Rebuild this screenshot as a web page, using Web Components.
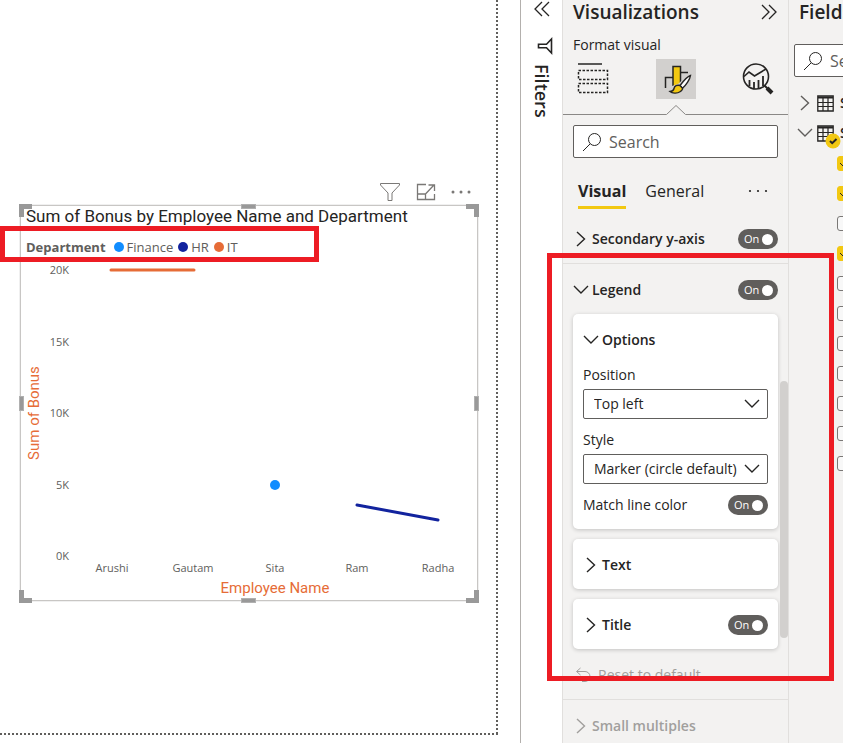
<!DOCTYPE html>
<html lang="en">
<head>
<meta charset="utf-8">
<title>Report editor</title>
<style>
  html, body { margin: 0; height: 100%; }
  body {
    position: relative;
    display: grid;
    grid-template-columns: minmax(0, 1fr) 41px 227px 54px;
    height: 100vh;
    overflow: hidden;
    background: #fff;
    color: #252423;
    font-family: "Open Sans", "Noto Sans", sans-serif;
    font-size: 14px;
    line-height: 20px;
  }
  .around-legend { left: 0; top: 226px; width: 319px; height: 36px; }
  .around-options { right: 9px; top: 253px; width: 287px; height: 428px; }
</style>
</head>
<body>
<report-canvas>
  <chart-visual heading="Sum of Bonus by Employee Name and Department">
    <legend-item slot="legend" style="--dot:#118dff">Finance</legend-item>
    <legend-item slot="legend" style="--dot:#12239e">HR</legend-item>
    <legend-item slot="legend" style="--dot:#e66c37">IT</legend-item>
  </chart-visual>
</report-canvas>
<filters-pane></filters-pane>
<viz-pane></viz-pane>
<fields-pane></fields-pane>
<callout-frame class="around-legend"></callout-frame>
<callout-frame class="around-options"></callout-frame>

<script>
const ICONS = {
  'right': [10, 18, '<path d="M1 2l7.500 7L1 16" stroke-width="1.400"/>'],
  'down': [16, 10, '<path d="M1 1l7 7 7-7" stroke-width="1.400"/>'],
  'collapse-left': [18, 16, '<path d="M9 1L2 8l7 7M16 1L9 8l7 7" stroke-width="1.300"/>'],
  'collapse-right': [18, 16, '<path d="M2 1l7 7-7 7M9 1l7 7-7 7" stroke-width="1.300"/>'],
  'search': [20, 20, '<circle cx="12.500" cy="7.500" r="6"/><path d="M8.200 11.800L1 19"/>'],
  'funnel': [22, 20, '<path d="M1.500 1.500h19v1.500L13 11v7.500H9V11L1.500 3z"/>'],
  'funnel-side': [16, 18, '<path d="M14.500 2v14l-5-5.200H1.500V7.200h8z" stroke-width="1.600"/>'],
  'focus': [20, 18, '<path d="M10 1.500H1.500v15h17V11M1.500 11h8v5.500M9.500 11L17.500 2.500M12.500 2h6v6" stroke-width="1.300"/>'],
  'more': [20, 6, '<g fill="currentColor" stroke="none"><circle cx="2" cy="3" r="1.500"/><circle cx="10" cy="3" r="1.500"/><circle cx="18" cy="3" r="1.500"/></g>'],
  'dots': [20, 6, '<g fill="currentColor" stroke="none"><circle cx="2" cy="3" r="1.100"/><circle cx="10" cy="3" r="1.100"/><circle cx="18" cy="3" r="1.100"/></g>'],
  'undo': [16, 16, '<path d="M5.500 1L1.500 4.500 5.500 8M2 4.500h8a4.500 4.500 0 0 1 0 10H7"/>'],
  'table': [17, 17, '<path d="M.8 1h15.400v15H.8z" stroke-width="1.300"/><path d="M1 2.500h15" stroke-width="2"/><path d="M1 7.500h15M1 11.500h15M6 3v13M11 3v13" stroke-width="1.200"/>'],
  'build': [32, 34, '<path d="M1 2h24" stroke-width="1.500"/><path d="M1.500 8.500h29v9h-29zM1.500 21.500h29v9h-29z" stroke-width="1.500" stroke-dasharray="2.500 1.500"/>'],
  'format': [40, 40, '<path d="M9.500 29V18.500H17M24.500 13.500H32" stroke-width="1.500"/><path d="M17 7.500h7.500V29H17z" fill="#f2c811" stroke-width="1.500"/><path d="M33 15L22 25l-6 2-5 7 10 3 8-6 8-13z" fill="#d2d0ce" stroke="none"/><path d="M34.500 16.500c-3 1-7.500 6-10.500 10l2.500 2.800c3.500-3 7.500-9 8-12.800z" fill="#fff" stroke-width="1.400"/><path d="M24 26.500c-3-1-5.500.5-6 3-.4 2-1.700 2.800-4 3 2 1.800 7 2.400 10 .3 2.200-1.500 2.800-2.500 2.500-3.500z" fill="#f2c811" stroke-width="1.400"/>'],
  'analyze': [32, 32, '<circle cx="14" cy="13.500" r="12.500" stroke-width="1.600"/><path d="M2 13.500l5-4.500 5.500 4L24 6" stroke-width="1.600"/><path d="M7.500 17v6M12 19v6.500M16.500 17v8.500M21 13v10" stroke-width="1.800"/><path d="M22.500 22.500L26 26" stroke-width="2"/><path d="M25 25l5 5" stroke-width="4"/>'],
  'badge': [16, 16, '<circle cx="8" cy="8" r="7.500" fill="#f2c811" stroke="none"/><path d="M5 8l2.200 2.200L11.500 6" stroke-width="2"/>']
};

class Base extends HTMLElement {
  connectedCallback() {
    if (this.shadowRoot) return;
    this.attachShadow({ mode: 'open' }).innerHTML =
      '<style>*{box-sizing:border-box}button{font:inherit;color:inherit;background:none;border:0;padding:0;text-align:left}' +
      this.css() + '</style>' + this.html();
  }
  css() { return ''; }
  html() { return '<slot></slot>'; }
}

customElements.define('ui-icon', class extends Base {
  css() { return ':host{display:inline-flex;flex:none}svg{display:block}'; }
  html() {
    const [w, h, body] = ICONS[this.getAttribute('name')];
    return `<svg width="${w}" height="${h}" viewBox="0 0 ${w} ${h}" fill="none" stroke="currentColor" aria-hidden="true">${body}</svg>`;
  }
});

customElements.define('callout-frame', class extends Base {
  css() { return ':host{position:absolute;box-sizing:border-box;border:5px solid #ed1c24;pointer-events:none;z-index:5}'; }
  html() { return ''; }
});

customElements.define('report-canvas', class extends Base {
  css() {
    return `:host{display:flex;border-right:1px solid #b3b0ad;padding:0 22px 8px 0;min-width:0;box-sizing:border-box}
    .page{flex:1;min-width:0;padding:182px 20px 0 20px;
      background:repeating-linear-gradient(180deg,#605e5c 0 2px,transparent 2px 4px) right/2px 100% no-repeat,
      repeating-linear-gradient(90deg,#605e5c 0 2px,transparent 2px 4px) bottom/100% 2px no-repeat}`;
  }
  html() { return '<main class="page"><slot></slot></main>'; }
});

customElements.define('legend-item', class extends Base {
  css() {
    return ':host{display:inline-flex;align-items:center;gap:3px}i{width:10px;height:10px;border-radius:50%;background:var(--dot)}';
  }
  html() { return '<i></i><span><slot></slot></span>'; }
});

customElements.define('chart-visual', class extends Base {
  css() {
    return `:host{display:block}
    .tools{display:flex;justify-content:flex-end;align-items:center;gap:15px;height:20px;margin:0 7px 3px 0;color:#7a7876}
    .tools button{display:flex}
    .frame{position:relative;border:1px solid #c8c6c4;box-shadow:0 0 0 1px #f0f0f0}
    h2{margin:0;padding-left:5px;font:400 17px/20px Roboto,sans-serif;color:#252423;white-space:nowrap}
    .legend{display:flex;align-items:center;gap:5px;margin-top:11px;padding-left:5px;font-size:13px;line-height:20px;color:#605e5c}
    .legend b{margin-right:3px}
    .plot{display:block;width:100%;height:auto;margin-top:5px;font-size:11px;fill:#605e5c;overflow:visible}
    .axis{font:400 15px Roboto,sans-serif;fill:#e66c37}
    .h{position:absolute;background:#999;box-shadow:inset 0 0 0 1px #b0b0b0}
    .t,.b{left:50%;width:15px;height:5px;margin-left:-8px}
    .t{top:-2px}.b{bottom:-3px}
    .l,.r{top:50%;width:5px;height:15px;margin-top:-7px}
    .l{left:-2px}.r{right:-2px}
    .c{position:absolute;width:13px;height:13px;border:0 solid #999}
    .tl{left:-2px;top:-2px;border-width:5px 0 0 5px}
    .tr{right:-2px;top:-2px;border-width:5px 5px 0 0}
    .bl{left:-2px;bottom:-3px;border-width:0 0 5px 5px}
    .br{right:-2px;bottom:-3px;border-width:0 5px 5px 0}`;
  }
  html() {
    const ys = [['20K', 12], ['15K', 84], ['10K', 155], ['5K', 227], ['0K', 298]];
    const xs = [['Arushi', 91], ['Gautam', 172], ['Sita', 254], ['Ram', 336], ['Radha', 417]];
    return `<div class="tools"><button aria-label="Filters"><ui-icon name="funnel"></ui-icon></button>
      <button aria-label="Focus mode"><ui-icon name="focus"></ui-icon></button>
      <button aria-label="More options"><ui-icon name="more"></ui-icon></button></div>
    <section class="frame">
      <i class="c tl"></i><i class="c tr"></i><i class="c bl"></i><i class="c br"></i>
      <i class="h t"></i><i class="h b"></i><i class="h l"></i><i class="h r"></i>
      <h2>${this.getAttribute('heading')}</h2>
      <div class="legend"><b>Department</b><slot name="legend"></slot></div>
      <svg class="plot" viewBox="0 0 456 338">
        ${ys.map(([t, y]) => `<text x="48" y="${y}" text-anchor="end">${t}</text>`).join('')}
        ${xs.map(([t, x]) => `<text x="${x}" y="310" text-anchor="middle">${t}</text>`).join('')}
        <text class="axis" x="254" y="331" text-anchor="middle">Employee Name</text>
        <text class="axis" transform="translate(18 151) rotate(-90)" text-anchor="middle">Sum of Bonus</text>
        <g fill="none" stroke-width="3" stroke-linecap="round">
          <path d="M90 8H173" stroke="#e66c37"/><path d="M336 243L417 258" stroke="#12239e"/>
        </g>
        <circle cx="254" cy="223" r="5" fill="#118dff"/>
      </svg>
    </section>`;
  }
});

customElements.define('filters-pane', class extends Base {
  css() {
    return `:host{display:flex;flex-direction:column;align-items:center;background:#fff}
    button{display:flex;margin-top:1px}.f{margin-top:20px;margin-left:7px}
    h2{margin:9px 0 0;font-size:18px;line-height:24px;font-weight:600;writing-mode:vertical-rl}`;
  }
  html() {
    return `<button aria-label="Expand filters"><ui-icon name="collapse-left"></ui-icon></button>
    <ui-icon class="f" name="funnel-side"></ui-icon><h2>Filters</h2>`;
  }
});

customElements.define('search-box', class extends Base {
  css() {
    return `:host{display:block}
    label{display:flex;align-items:center;gap:7px;height:33px;padding-left:8px;background:#fff;border:1px solid #605e5c;border-radius:2px}
    input{flex:1;min-width:0;width:0;border:0;padding:0;outline:0;background:none;font:inherit;font-size:16px;color:inherit}
    input::placeholder{color:#605e5c;opacity:1}`;
  }
  html() { return '<label><ui-icon name="search"></ui-icon><input type="search" placeholder="Search" aria-label="Search"></label>'; }
});

customElements.define('toggle-switch', class extends Base {
  css() {
    return `:host{display:block;flex:none}
    label{display:grid;align-items:center;width:40px;height:20px}
    input,span,i{grid-area:1/1}
    input{appearance:none;margin:0;width:40px;height:20px;border-radius:10px;background:#605e5c}
    span{padding-left:6px;color:#fff;font-size:11px;line-height:20px;pointer-events:none}
    i{justify-self:end;margin-right:5px;width:11px;height:11px;border-radius:50%;background:#fff;pointer-events:none}`;
  }
  html() {
    return `<label><input type="checkbox" role="switch" checked aria-label="${this.getAttribute('label')}"><span>On</span><i></i></label>`;
  }
});

customElements.define('group-header', class extends Base {
  css() {
    return `:host{display:flex;align-items:center;height:50px;padding-top:2px;box-sizing:border-box}
    button{flex:1;display:flex;align-items:center;gap:4px;font-weight:600}
    .i{display:flex;justify-content:center;width:15px}`;
  }
  html() {
    const open = this.hasAttribute('open'), name = this.getAttribute('label');
    return `<button aria-expanded="${open}"><span class="i"><ui-icon name="${open ? 'down' : 'right'}"></ui-icon></span>${name}</button>` +
      (this.hasAttribute('toggle') ? `<toggle-switch label="${name}"></toggle-switch>` : '');
  }
});

customElements.define('option-card', class extends Base {
  css() {
    return ':host{display:block;padding:0 10px;background:#fff;border-radius:5px;box-shadow:0 1px 4px rgba(0,0,0,.2)}';
  }
});

customElements.define('pick-list', class extends Base {
  css() {
    return `:host{display:block;margin-bottom:11px}
    label{display:grid;grid-template-rows:20px 30px;row-gap:4px;align-items:center}
    select,ui-icon{grid-area:2/1}
    select{appearance:none;width:100%;height:30px;padding:0 28px 0 10px;border:1px solid #605e5c;border-radius:2px;background:#fff;font:inherit;color:inherit}
    ui-icon{justify-self:end;margin-right:8px;pointer-events:none}`;
  }
  html() {
    return `<label>${this.getAttribute('label')}<select><option>${this.getAttribute('value')}</option></select><ui-icon name="down"></ui-icon></label>`;
  }
});

customElements.define('viz-pane', class extends Base {
  css() {
    return `:host{position:relative;display:block;min-width:0;background:#f3f2f1;border:solid #e1dfdd;border-width:0 1px;box-sizing:border-box;overflow:hidden}
    .pad{padding:0 10px}
    header{display:flex;align-items:center;justify-content:space-between;height:24px}
    header button{display:flex}
    h2{margin:0;font-size:19px;line-height:24px;font-weight:600}
    p{margin:9px 0 2px;line-height:24px}
    .modes{display:flex;justify-content:space-between;padding:0 4px}
    .modes button{display:grid;place-items:center;height:40px;min-width:32px}
    .modes .on{width:40px;background:#d2d0ce}
    .notch{display:flex;align-items:flex-end;height:16px;margin-bottom:10px}
    .notch::before,.notch::after{content:"";flex:1;border-bottom:1px solid #8a8886}
    .notch svg{display:block;flex:none}
    .tabs{display:flex;align-items:flex-start;margin:21px 0 4px;padding:0 5px;font-size:16px;line-height:24px}
    .tabs button{height:30px;margin-right:19px;padding-bottom:3px;border-bottom:3px solid transparent}
    .tabs .on{font-weight:700;border-color:#f2c811}
    .tabs .more{display:flex;margin:0 5px 0 auto;height:24px;border:0;padding:0;align-items:center}
    .sec{padding:0 10px;border-bottom:1px solid #e1dfdd}
    .cards{display:grid;gap:10px}
    .options{margin-bottom:1px}
    .row{display:flex;align-items:center;justify-content:space-between;padding-bottom:14px}
    .reset{display:flex;align-items:center;gap:7px;height:50px;padding:2px 0 0 2px}
    .off{color:#a19f9d}
    .thumb{position:absolute;right:0;top:381px;width:8px;height:257px;border-radius:4px;background:#d2d0ce}`;
  }
  html() {
    return `<div class="pad">
      <header><h2>Visualizations</h2><button aria-label="Collapse"><ui-icon name="collapse-right"></ui-icon></button></header>
      <p>Format visual</p>
      <div class="modes"><button aria-label="Build visual"><ui-icon name="build"></ui-icon></button>
        <button class="on" aria-label="Format visual"><ui-icon name="format"></ui-icon></button>
        <button aria-label="Analytics"><ui-icon name="analyze"></ui-icon></button></div>
    </div>
    <div class="notch"><svg width="22" height="10" viewBox="0 0 22 10" fill="none" stroke="#8a8886"><path d="M0 9.500H1.500L11 .5l9.500 9H22"/></svg></div>
    <div class="pad"><search-box></search-box>
      <nav class="tabs"><button class="on">Visual</button><button>General</button><button class="more" aria-label="More options"><ui-icon name="dots"></ui-icon></button></nav>
    </div>
    <div class="sec"><group-header label="Secondary y-axis" toggle></group-header></div>
    <div class="sec">
      <group-header label="Legend" open toggle></group-header>
      <div class="cards">
        <option-card>
          <group-header class="options" label="Options" open></group-header>
          <pick-list label="Position" value="Top left"></pick-list>
          <pick-list label="Style" value="Marker (circle default)"></pick-list>
          <div class="row"><span>Match line color</span><toggle-switch label="Match line color"></toggle-switch></div>
        </option-card>
        <option-card><group-header label="Text"></group-header></option-card>
        <option-card><group-header label="Title" toggle></group-header></option-card>
      </div>
      <button class="reset off"><ui-icon name="undo"></ui-icon>Reset to default</button>
    </div>
    <div class="sec off"><group-header label="Small multiples"></group-header></div>
    <div class="thumb"></div>`;
  }
});

customElements.define('field-check', class extends Base {
  css() {
    return `:host{display:flex;align-items:center;height:30px;padding-left:48px;box-sizing:border-box}
    label{display:grid;place-items:center}
    input,svg{grid-area:1/1}
    input{appearance:none;margin:0;width:15px;height:15px;border:1px solid #7a7876;border-radius:3px;background:#f8f8f8}
    input:checked{background:#f2c811;border-color:#f2c811}
    svg{pointer-events:none;visibility:hidden}input:checked+svg{visibility:visible}`;
  }
  html() {
    return `<label><input type="checkbox" aria-label="Field" ${this.hasAttribute('checked') ? 'checked' : ''}><svg width="11" height="9" viewBox="0 0 11 9" fill="none" stroke="#252423"><path d="M1 4l3 3 6-6"/></svg></label>`;
  }
});

customElements.define('fields-pane', class extends Base {
  css() {
    return `:host{display:block;min-width:0;overflow:hidden;background:#f3f2f1}
    .in{width:200px;padding-left:5px}
    h2{margin:0 0 20px 5px;font-size:19px;line-height:24px;font-weight:600}
    search-box{margin-bottom:11px}
    .t{display:flex;align-items:center;height:30px;gap:4px;width:100%;padding-left:3px;font-weight:600}
    .t .c{display:flex;justify-content:center;width:16px;color:#605e5c}
    .t .k{position:relative;display:flex;margin-right:2px}
    .k .b{position:absolute;left:8px;top:8px}
    .list{margin-left:-5px}`;
  }
  html() {
    const on = [1, 1, 0, 1, 0, 0, 0, 0, 0, 0, 0];
    return `<div class="in"><h2>Fields</h2><search-box></search-box>
    <button class="t"><span class="c"><ui-icon name="right"></ui-icon></span><span class="k"><ui-icon name="table"></ui-icon></span>S</button>
    <button class="t"><span class="c"><ui-icon name="down"></ui-icon></span><span class="k"><ui-icon name="table"></ui-icon><ui-icon class="b" name="badge"></ui-icon></span>S</button>
    <div class="list">${on.map(c => `<field-check${c ? ' checked' : ''}></field-check>`).join('')}</div></div>`;
  }
});
</script>
</body>
</html>
